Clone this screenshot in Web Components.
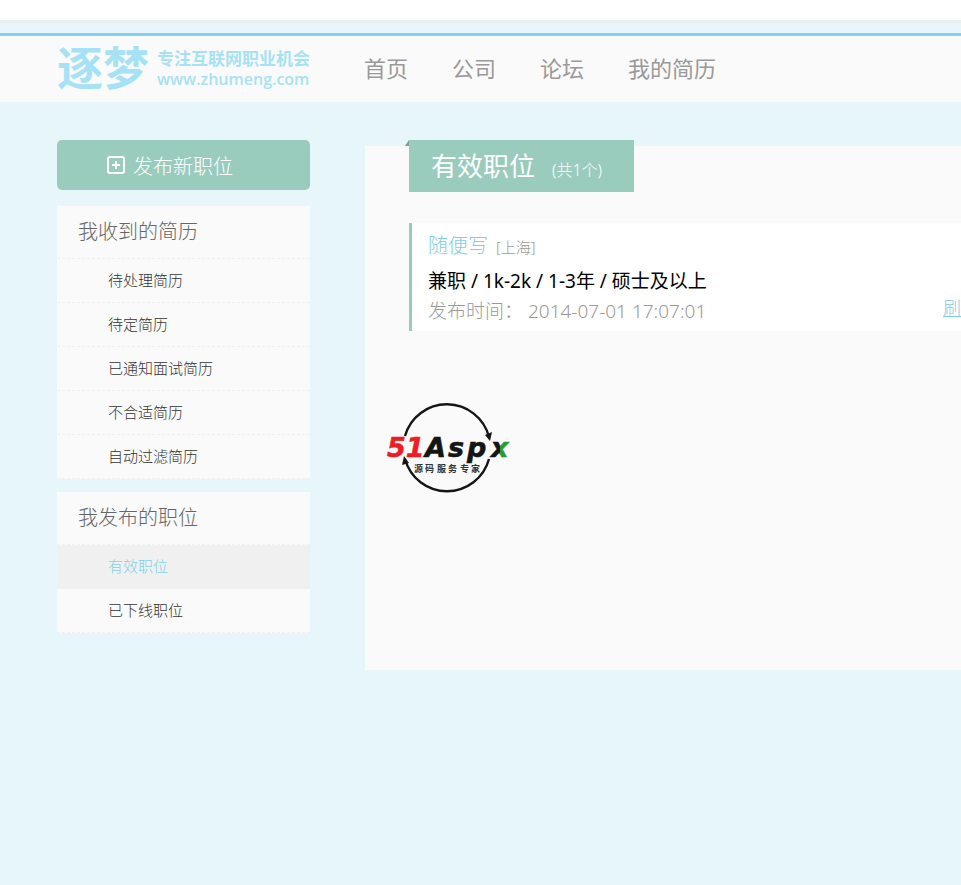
<!DOCTYPE html>
<html lang="zh-CN">
<head>
<meta charset="utf-8">
<title>有效职位</title>
<style>
  body {
    margin: 0;
    min-height: 100vh;
    background: #e6f6fb;
    font-family: "Noto Sans", "Noto Sans CJK SC", sans-serif;
    font-weight: 300;
    color: #555;
  }
</style>
</head>
<body>
<job-page>
  <site-header slot="header"></site-header>
  <post-button slot="side">发布新职位</post-button>
  <side-menu slot="side" heading="我收到的简历">
    <menu-item>待处理简历</menu-item>
    <menu-item>待定简历</menu-item>
    <menu-item>已通知面试简历</menu-item>
    <menu-item>不合适简历</menu-item>
    <menu-item>自动过滤简历</menu-item>
  </side-menu>
  <side-menu slot="side" heading="我发布的职位">
    <menu-item active>有效职位</menu-item>
    <menu-item>已下线职位</menu-item>
  </side-menu>
  <job-list heading="有效职位" count="(共1个)">
    <job-card>
      <span slot="name">随便写</span>
      <span slot="city">[上海]</span>
      <span slot="info">兼职 / 1k-2k / 1-3年 / 硕士及以上</span>
      <span slot="time">发布时间： 2014-07-01 17:07:01</span>
    </job-card>
    <aspx-logo></aspx-logo>
  </job-list>
</job-page>

<script>
class JobPage extends HTMLElement {
  constructor() {
    super();
    this.attachShadow({ mode: 'open' }).innerHTML = `
      <style>
        :host { display: block; }
        .body {
          display: grid;
          grid-template-columns: 253px minmax(0, 1fr);
          gap: 55px;
          align-items: start;
          padding: 38px 0 40px 57px;
        }
        main { padding-top: 6px; }
      </style>
      <slot name="header"></slot>
      <div class="body">
        <aside><slot name="side"></slot></aside>
        <main><slot></slot></main>
      </div>
    `;
  }
}

class SiteHeader extends HTMLElement {
  constructor() {
    super();
    this.attachShadow({ mode: 'open' }).innerHTML = `
      <style>
        :host { display: block; background: #fff; padding-top: 20px; }
        .strip {
          height: 10px;
          border-top: 3px solid #ecefef;
          border-bottom: 3px solid #80d3ef;
          background: #e6f6fa;
        }
        header {
          display: flex;
          align-items: center;
          height: 62px;
          padding: 0 0 4px 57px;
          background: #fafafa;
        }
        a { text-decoration: none; color: inherit; }
        .logo {
          display: flex;
          align-items: center;
          gap: 8px;
          width: 307px;
          color: #a6e2f5;
          font-weight: 700;
          white-space: nowrap;
        }
        .mark { font-size: 46px; line-height: 60px; }
        .slogan { padding-top: 4px; font-size: 17px; line-height: 20px; }
        .slogan span { display: block; }
        .slogan .url { font-size: 16px; font-family: "Open Sans", sans-serif; font-weight: 600; }
        nav { display: flex; gap: 44px; font-size: 22px; font-weight: 400; color: #999; }
      </style>
      <div class="strip"></div>
      <header>
        <a class="logo" href="#">
          <span class="mark">逐梦</span>
          <span class="slogan">
            <span>专注互联网职业机会</span>
            <span class="url">www.zhumeng.com</span>
          </span>
        </a>
        <nav>
          <a href="#">首页</a>
          <a href="#">公司</a>
          <a href="#">论坛</a>
          <a href="#">我的简历</a>
        </nav>
      </header>
    `;
  }
}

class PostButton extends HTMLElement {
  constructor() {
    super();
    this.attachShadow({ mode: 'open' }).innerHTML = `
      <style>
        :host { display: block; margin-bottom: 16px; }
        button {
          display: flex;
          align-items: center;
          gap: 8px;
          width: 100%;
          height: 50px;
          padding: 0 0 0 50px;
          border: 0;
          border-radius: 5px;
          background: #9accbd;
          color: #fff;
          font: inherit;
          font-size: 20px;
        }
      </style>
      <button type="button">
        <svg width="18" height="18" viewBox="0 0 18 18" fill="none" stroke="#fff" stroke-width="2" aria-hidden="true">
          <rect x="1" y="1" width="16" height="16" rx="2"/>
          <path d="M9 5v8M5 9h8"/>
        </svg>
        <slot></slot>
      </button>
    `;
  }
}

class SideMenu extends HTMLElement {
  constructor() {
    super();
    this.attachShadow({ mode: 'open' }).innerHTML = `
      <style>
        :host { display: block; margin-bottom: 13px; background: #fafafa; }
        h2 {
          margin: 0;
          padding-left: 21px;
          border-bottom: 1px dashed #f0f0f0;
          font-size: 20px;
          font-weight: 300;
          line-height: 52px;
          color: #666;
        }
      </style>
      <h2></h2>
      <nav><slot></slot></nav>
    `;
  }

  connectedCallback() {
    this.shadowRoot.querySelector('h2').textContent = this.getAttribute('heading');
  }
}

class MenuItem extends HTMLElement {
  constructor() {
    super();
    this.attachShadow({ mode: 'open' }).innerHTML = `
      <style>
        :host { display: block; color: #333; }
        :host([active]) { background: #f0f0f0; color: #7fd0ea; }
        a {
          display: block;
          padding-left: 51px;
          border-bottom: 1px dashed #f0f0f0;
          font-size: 15px;
          line-height: 43px;
          color: inherit;
          text-decoration: none;
        }
      </style>
      <a href="#"><slot></slot></a>
    `;
  }
}

class JobList extends HTMLElement {
  constructor() {
    super();
    this.attachShadow({ mode: 'open' }).innerHTML = `
      <style>
        :host { display: flow-root; background: #fafafa; padding-bottom: 177px; }
        h1 {
          position: relative;
          display: flex;
          align-items: baseline;
          gap: 17px;
          width: fit-content;
          height: 52px;
          margin: -6px 0 31px 44px;
          padding: 0 32px 0 22px;
          background: #9accbd;
          color: #fff;
          font-size: 26px;
          font-weight: 400;
          line-height: 52px;
        }
        /* folded ribbon corner */
        h1::before {
          content: "";
          position: absolute;
          right: 100%;
          top: 0;
          border-left: 4px solid transparent;
          border-bottom: 6px solid #7a9f94;
        }
        small { font-size: 16px; font-weight: 300; line-height: 24px; }
      </style>
      <h1><span></span><small></small></h1>
      <slot></slot>
    `;
  }

  connectedCallback() {
    this.shadowRoot.querySelector('span').textContent = this.getAttribute('heading');
    this.shadowRoot.querySelector('small').textContent = this.getAttribute('count');
  }
}

class JobCard extends HTMLElement {
  constructor() {
    super();
    this.attachShadow({ mode: 'open' }).innerHTML = `
      <style>
        :host {
          display: block;
          margin-left: 44px;
          padding: 4px 0 4px 16px;
          border-left: 3px solid #9accbd;
          background: #fff;
          font-size: 19px;
          color: #999;
        }
        a { color: #7fcde6; }
        .name { font-size: 20px; text-decoration: none; }
        .top { display: flex; align-items: baseline; gap: 8px; height: 38px; line-height: 38px; }
        .city { font-size: 15px; line-height: 20px; }
        .info { height: 32px; line-height: 32px; color: #000; font-weight: 400; }
        .foot { display: flex; justify-content: space-between; height: 30px; line-height: 28px; }
        .foot a { font-size: 18px; line-height: 22px; }
      </style>
      <div class="top">
        <a class="name" href="#"><slot name="name"></slot></a>
        <span class="city"><slot name="city"></slot></span>
      </div>
      <div class="info"><slot name="info"></slot></div>
      <div class="foot">
        <slot name="time"></slot>
        <a href="#">刷</a>
      </div>
    `;
  }
}

class AspxLogo extends HTMLElement {
  constructor() {
    super();
    this.attachShadow({ mode: 'open' }).innerHTML = `
      <style>
        :host { display: block; margin: 72px 0 0 22px; }
        svg { display: block; overflow: visible; }
        .word { font: italic 700 27px "DejaVu Sans", sans-serif; }
        .sub { font: 700 9px "Noto Sans CJK SC", sans-serif; }
      </style>
      <svg width="124" height="90" viewBox="0 0 124 90">
        <defs>
          <linearGradient id="x" gradientUnits="userSpaceOnUse" x1="102" y1="0" x2="124" y2="0">
            <stop offset=".5" stop-color="#151515"/>
            <stop offset=".5" stop-color="#2a9a35"/>
          </linearGradient>
        </defs>
        <g fill="none" stroke="#151515" stroke-width="2.4">
          <path d="M18 33A43.500 43.500 0 0 1 102 34"/>
          <path d="M18 56A43.500 43.500 0 0 0 102 56"/>
        </g>
        <path d="M98 32l5 6 2-9z" fill="#151515"/>
        <path d="M15 62l2-9 5 7z" fill="#151515"/>
        <text class="word" y="54" stroke-width=".6"><tspan x="0" fill="#ee1c25" stroke="#ee1c25">51</tspan><tspan x="38" fill="#151515" stroke="#151515">A</tspan><tspan x="61" fill="#151515" stroke="#151515">s</tspan><tspan x="80" fill="#151515" stroke="#151515">p</tspan><tspan x="104" fill="url(#x)" stroke="url(#x)">x</tspan></text>
        <text class="sub" y="69" fill="#333"><tspan x="27">源</tspan><tspan x="38">码</tspan><tspan x="50">服</tspan><tspan x="61">务</tspan><tspan x="73">专</tspan><tspan x="84">家</tspan></text>
      </svg>
    `;
  }
}

customElements.define('job-page', JobPage);
customElements.define('site-header', SiteHeader);
customElements.define('post-button', PostButton);
customElements.define('side-menu', SideMenu);
customElements.define('menu-item', MenuItem);
customElements.define('job-list', JobList);
customElements.define('job-card', JobCard);
customElements.define('aspx-logo', AspxLogo);
</script>
</body>
</html>
